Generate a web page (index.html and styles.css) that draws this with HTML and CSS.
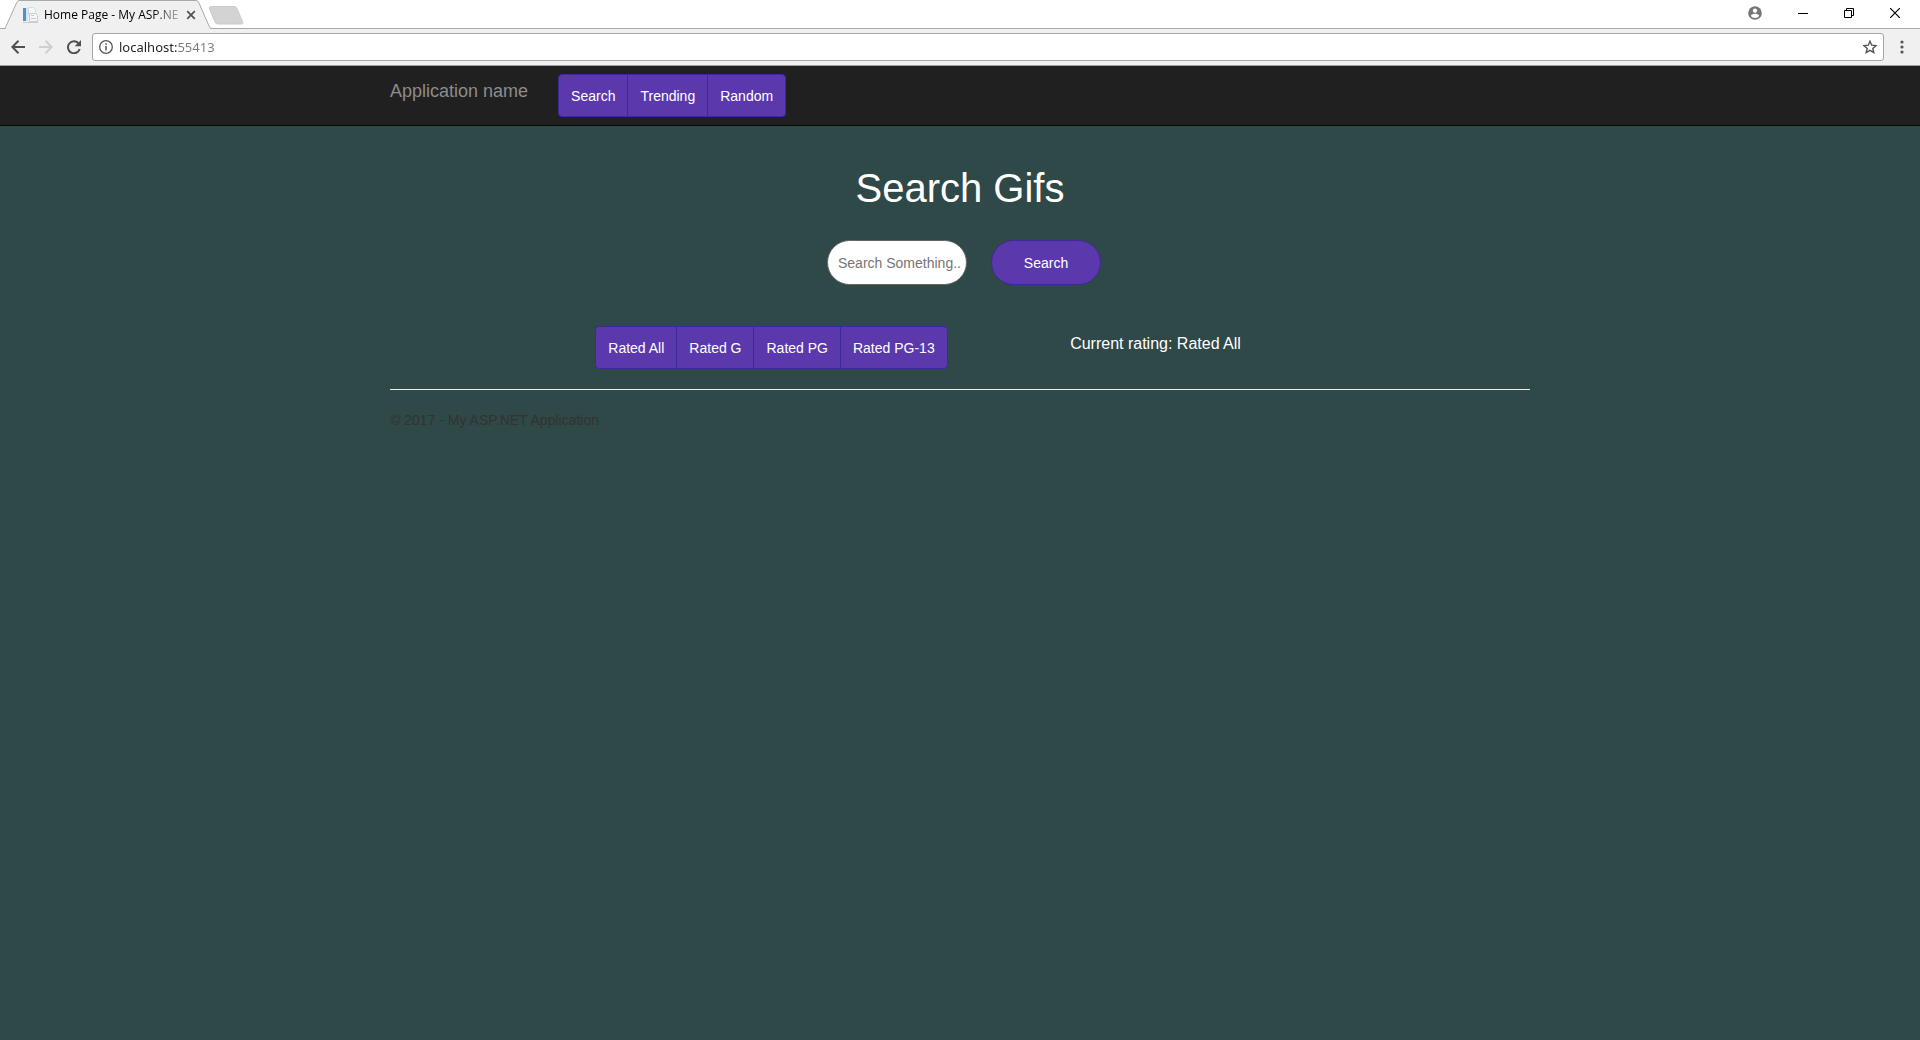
FILE: index.html
```html
<!DOCTYPE html>
<html lang="en">
<head>
<meta charset="utf-8">
<meta name="viewport" content="width=device-width, initial-scale=1">
<title>Home Page - My ASP.NET Application</title>
<link rel="stylesheet" href="styles.css">
</head>
<body>
<div class="browser">
  <div class="tabstrip">
    <div class="tab">
      <svg class="tab-shape" width="208" height="29" viewBox="0 0 208 29" aria-hidden="true"><path d="M0 28.500L11.500 3Q12.500.5 14 .5H191Q193 .5 194 3L204 26L206 28.500" fill="#f0f0f0" stroke="#a9a9a9"/><path d="M1 28.500H205" stroke="#f0f0f0"/></svg>
      <svg class="favicon" width="16" height="16" viewBox="0 0 16 16" aria-hidden="true"><path d="M1 1h3v13H1z" fill="#4d94c4"/><path d="M4 1h2v13H4z" fill="#d5e5ef"/><path d="M6.500.5h5l2 2v5h-7z" fill="#f4f7fa" stroke="#d5dce3"/><path d="M7.500 6.500h6l2 2v6h-8z" fill="#f4f7fa" stroke="#c5ced8"/><path d="M9 8.500h3M9 11.500h5" stroke="#bccbd8"/><path d="M1 15.500h15" stroke="#c5ced8"/></svg>
      <span class="tab-title">Home Page - My ASP.NE</span>
      <button class="icon-button" aria-label="Close tab"><svg width="10" height="10" viewBox="0 0 10 10"><path d="M1.200 1.200l7.600 7.600M8.800 1.200L1.200 8.800" stroke="#505050" stroke-width="1.700"/></svg></button>
    </div>
    <button class="icon-button new-tab" aria-label="New tab"><svg width="36" height="19" viewBox="0 0 36 19"><path d="M3 .5h23q2 0 3 2l5.500 13q1 2.500-1.500 2.500H10q-2 0-3-2L1.500 3Q.5.500 3 .5z" fill="#d3d3d3" stroke="#cacaca"/></svg></button>
    <div class="window-controls">
      <button class="icon-button" aria-label="Profile"><svg width="14" height="14" viewBox="0 0 14 14"><circle cx="7" cy="7" r="6.800" fill="#757575"/><circle cx="7" cy="4.600" r="2.200" fill="#fff"/><path d="M2.800 9.800C3.500 8.200 5.500 7.700 7 7.700s3.500.5 4.200 2.100C10.300 11.300 8.700 12 7 12s-3.300-.7-4.200-2.200z" fill="#fff"/></svg></button>
      <button class="icon-button" aria-label="Minimize"><svg width="10" height="10" viewBox="0 0 10 10"><path d="M0 5.500h10" stroke="#000"/></svg></button>
      <button class="icon-button" aria-label="Restore"><svg width="10" height="10" viewBox="0 0 10 10" fill="none" stroke="#000"><path d="M.5 2.500h7v7h-7zM2.500 2.500v-2h7v7h-2"/></svg></button>
      <button class="icon-button" aria-label="Close"><svg width="10" height="10" viewBox="0 0 10 10"><path d="M0 0l10 10M10 0L0 10" stroke="#000" stroke-width="1.200"/></svg></button>
    </div>
  </div>
  <div class="toolbar">
    <div class="nav-buttons">
      <button class="icon-button" aria-label="Back"><svg width="14" height="14" viewBox="0 0 14 14" fill="none" stroke="#505050" stroke-width="2"><path d="M14 7H1.500M7.500.8L1.400 7l6.100 6.200"/></svg></button>
      <button class="icon-button" aria-label="Forward" disabled><svg width="14" height="14" viewBox="0 0 14 14" fill="none" stroke="#cfcfcf" stroke-width="2"><path d="M0 7h12.500M6.500.8L12.600 7l-6.100 6.200"/></svg></button>
      <button class="icon-button" aria-label="Reload"><svg width="14" height="14" viewBox="0 0 14 14"><path d="M11.500 3.300A6 6 0 1 0 12.700 9" fill="none" stroke="#505050" stroke-width="2"/><path d="M14 0v6.300H7.700z" fill="#505050"/></svg></button>
    </div>
    <div class="omnibox">
      <svg width="14" height="14" viewBox="0 0 14 14" aria-hidden="true"><circle cx="7" cy="7" r="6.300" fill="none" stroke="#555" stroke-width="1.300"/><path d="M7 6v4.500M7 3.300v1.500" stroke="#555" stroke-width="1.500"/></svg>
      <input class="address" type="text" aria-label="Address" value="localhost:55413">
      <button class="icon-button" aria-label="Bookmark this page"><svg width="14" height="14" viewBox="0 0 14 14"><path d="M7 1.200l1.700 4 4.300.4-3.200 2.800 1 4.200L7 10.400l-3.800 2.200 1-4.200L1 5.600l4.300-.4z" fill="none" stroke="#555" stroke-width="1.400"/></svg></button>
    </div>
    <button class="icon-button" aria-label="Menu"><svg width="4" height="14" viewBox="0 0 4 14" fill="#555"><circle cx="2" cy="2" r="1.600"/><circle cx="2" cy="7" r="1.600"/><circle cx="2" cy="12" r="1.600"/></svg></button>
  </div>
</div>

<header class="navbar">
  <div class="container navbar-inner">
    <a class="brand" href="#">Application name</a>
    <nav class="button-group">
      <button class="btn">Search</button>
      <button class="btn">Trending</button>
      <button class="btn">Random</button>
    </nav>
  </div>
</header>

<main class="container content">
  <h1>Search Gifs</h1>
  <form class="search-form">
    <input class="search-input" type="text" aria-label="Search" placeholder="Search Something...">
    <button class="btn search-button" type="button">Search</button>
  </form>
  <div class="ratings">
    <div class="button-group">
      <button class="btn">Rated All</button>
      <button class="btn">Rated G</button>
      <button class="btn">Rated PG</button>
      <button class="btn">Rated PG-13</button>
    </div>
    <p class="current-rating">Current rating: Rated All</p>
  </div>
  <hr>
  <footer>© 2017 - My ASP.NET Application</footer>
</main>
</body>
</html>
```
FILE: styles.css
```css
* { box-sizing: border-box; }

body {
  margin: 0;
  min-height: 100vh;
  background: #2f4848;
  color: #333;
  font: 14px/20px "Liberation Sans", Arial, sans-serif;
}

svg { display: block; flex: none; }

/* Browser chrome */
.browser {
  background: #fff;
  border-bottom: 1px solid #a0a0a0;
  font-family: "Open Sans", "Noto Sans", sans-serif;
}

.icon-button {
  display: flex;
  padding: 0;
  border: 0;
  background: none;
}

.tabstrip {
  display: flex;
  height: 29px;
  padding-left: 5px;
  border-bottom: 1px solid #a9a9a9;
}

.tab {
  position: relative;
  display: flex;
  align-items: center;
  width: 203px;
  height: 29px;
  padding-left: 17px;
}

.tab > * { position: relative; }

.tab > .tab-shape {
  position: absolute;
  top: 0;
  left: 0;
}

.tab-title {
  margin: 0 8px 0 6px;
  flex: 0 0 132px;
  color: #000;
  font: 12px/16px "Open Sans", "Noto Sans", sans-serif;
  white-space: nowrap;
  -webkit-mask-image: linear-gradient(to right, #000 108px, transparent 144px);
  mask-image: linear-gradient(to right, #000 108px, transparent 144px);
}

.new-tab { margin-top: 6px; align-self: flex-start; }

.window-controls {
  display: flex;
  align-items: center;
  gap: 36px;
  height: 26px;
  margin-left: auto;
  padding-right: 20px;
}

.toolbar {
  display: flex;
  align-items: center;
  gap: 16px;
  height: 36px;
  padding: 0 16px 0 11px;
  background: #f0f0f0;
}

.nav-buttons { display: flex; gap: 14px; margin-right: -5px; }

.omnibox {
  display: flex;
  flex: 1;
  align-items: center;
  gap: 6px;
  height: 28px;
  padding: 0 6px;
  border: 1px solid #a6a6a6;
  border-radius: 3px;
  background: #fff;
}

.address {
  flex: 1;
  min-width: 0;
  padding: 0;
  border: 0;
  outline: 0;
  background: linear-gradient(to right, #222 58px, #7a7a7a 58px);
  -webkit-background-clip: text;
  background-clip: text;
  color: transparent;
  font: 13px/20px "Noto Sans", sans-serif;
}

/* Page */
.container {
  width: 100%;
  max-width: 1170px;
  margin: 0 auto;
  padding: 0 15px;
}

.navbar {
  min-height: 60px;
  border-bottom: 1px solid #080808;
  background: #202020;
}

.navbar-inner {
  display: flex;
  align-items: flex-start;
  gap: 30px;
  padding-top: 8px;
}

.brand {
  padding-top: 7px;
  color: #8c8c8c;
  font-size: 18px;
  text-decoration: none;
}

.button-group { display: flex; }

.btn {
  height: 43px;
  padding: 0 12px;
  border: 1px solid #3f2899;
  background: #5b39ad;
  color: #fff;
  font: inherit;
}

.button-group .btn + .btn { margin-left: -1px; }
.button-group .btn:first-child { border-radius: 4px 0 0 4px; }
.button-group .btn:last-child { border-radius: 0 4px 4px 0; }

.content { padding-top: 40px; }

h1 {
  margin: 0 0 30px;
  color: #fff;
  font-size: 40px;
  font-weight: 400;
  line-height: 44px;
  text-align: center;
}

.search-form {
  display: flex;
  justify-content: center;
  gap: 24px;
  margin-bottom: 41px;
  padding-left: 8px;
}

.search-input {
  width: 140px;
  height: 45px;
  padding: 0 5px 0 10px;
  border: 1px solid #666;
  border-radius: 23px;
  background: #fff;
  font: inherit;
}

.search-input::placeholder { color: #757575; }

.search-form .search-button {
  width: 110px;
  height: 45px;
  border-radius: 23px;
}

.ratings {
  display: grid;
  grid-template-columns: 384px 384px;
  justify-content: center;
  justify-items: center;
  padding-left: 7px;
}

.current-rating {
  margin: 8px 0 0;
  color: #fff;
  font-size: 16px;
}

hr {
  margin: 20px 0;
  border: 0;
  border-top: 1px solid #eee;
}
```
